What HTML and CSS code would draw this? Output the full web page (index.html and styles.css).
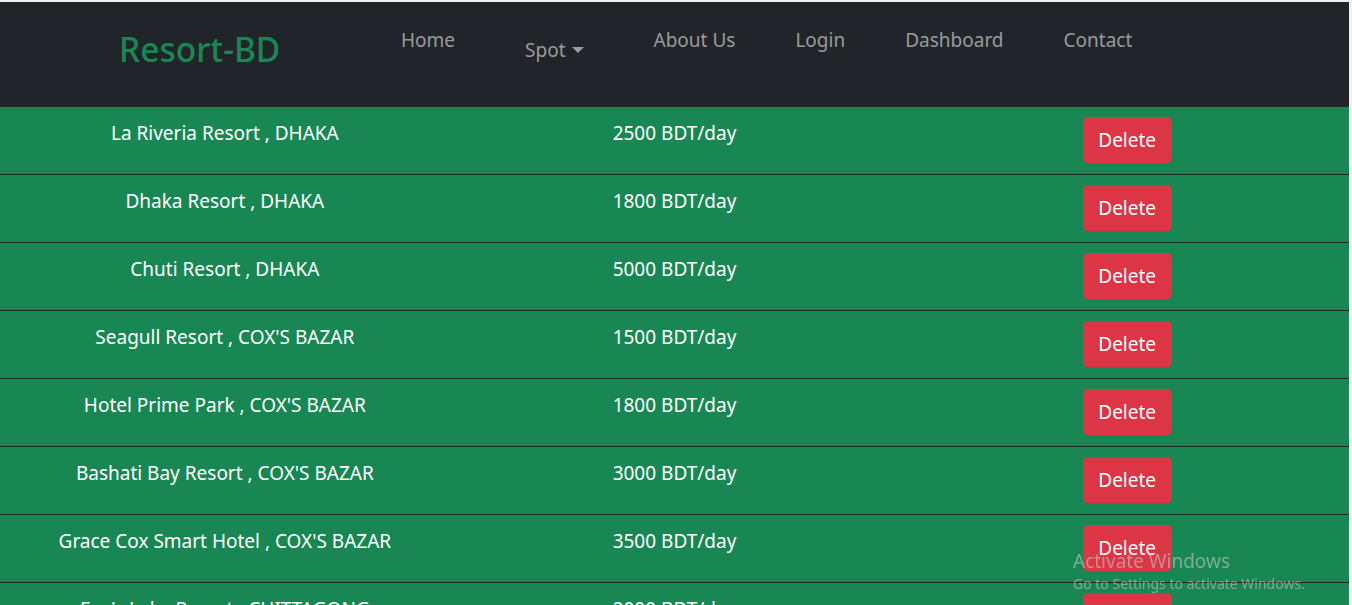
FILE: index.html
```html
<!DOCTYPE html>
<html lang="en">
<head>
<meta charset="utf-8">
<title>Resort-BD</title>
<link rel="stylesheet" href="styles.css">
</head>
<body>
<div class="page">
  <header class="navbar">
    <div class="brand">Resort-BD</div>
    <nav class="nav">
      <a class="nav-link">Home</a>
      <a class="nav-link spot">Spot<span class="caret"></span></a>
      <a class="nav-link">About Us</a>
      <a class="nav-link">Login</a>
      <a class="nav-link">Dashboard</a>
      <a class="nav-link">Contact</a>
    </nav>
  </header>
  <main class="list">
    <div class="row"><div class="cell">La Riveria Resort , DHAKA</div><div class="cell">2500 BDT/day</div><div class="cell"><button class="btn-delete">Delete</button></div></div>
    <div class="row"><div class="cell">Dhaka Resort , DHAKA</div><div class="cell">1800 BDT/day</div><div class="cell"><button class="btn-delete">Delete</button></div></div>
    <div class="row"><div class="cell">Chuti Resort , DHAKA</div><div class="cell">5000 BDT/day</div><div class="cell"><button class="btn-delete">Delete</button></div></div>
    <div class="row"><div class="cell">Seagull Resort , COX'S BAZAR</div><div class="cell">1500 BDT/day</div><div class="cell"><button class="btn-delete">Delete</button></div></div>
    <div class="row"><div class="cell">Hotel Prime Park , COX'S BAZAR</div><div class="cell">1800 BDT/day</div><div class="cell"><button class="btn-delete">Delete</button></div></div>
    <div class="row"><div class="cell">Bashati Bay Resort , COX'S BAZAR</div><div class="cell">3000 BDT/day</div><div class="cell"><button class="btn-delete">Delete</button></div></div>
    <div class="row"><div class="cell">Grace Cox Smart Hotel , COX'S BAZAR</div><div class="cell">3500 BDT/day</div><div class="cell"><button class="btn-delete">Delete</button></div></div>
    <div class="row"><div class="cell">Foy's Lake Resort , CHITTAGONG</div><div class="cell">2000 BDT/day</div><div class="cell"><button class="btn-delete">Delete</button></div></div>
  </main>
</div>
<div class="watermark">
  <div class="wm-title">Activate Windows</div>
  <div class="wm-sub">Go to Settings to activate Windows.</div>
</div>
</body>
</html>
```

FILE: styles.css
```css
html, body {
  margin: 0;
  padding: 0;
  height: 100%;
  overflow: hidden;
}
body {
  background: #f1f1f1;
  font-family: "Noto Sans", "Open Sans", "Liberation Sans", sans-serif;
  padding-top: 2px;
  padding-right: 3px;
  box-sizing: border-box;
}
.page {
  background: #198754;
}
.navbar {
  background: #212529;
  height: 105px;
  box-sizing: border-box;
  padding-top: 22px;
  display: flex;
  align-items: flex-start;
}
.brand {
  flex: 0 0 371px;
  box-sizing: border-box;
  padding-left: 119px;
  white-space: nowrap;
  color: #198754;
  font-size: 33.5px;
  line-height: 50px;
  font-weight: 500;
}
.nav {
  display: flex;
  align-items: flex-start;
}
.nav-link {
  color: rgba(255, 255, 255, 0.55);
  font-size: 19px;
  line-height: 32px;
  padding: 0 30px;
  white-space: nowrap;
}
.nav-link.spot {
  padding: 0 40px;
  margin-top: 10px;
  display: flex;
  align-items: center;
}
.caret {
  display: inline-block;
  margin-left: 6px;
  width: 0;
  height: 0;
  border-top: 6px solid rgba(255, 255, 255, 0.55);
  border-left: 6px solid transparent;
  border-right: 6px solid transparent;
}
.list {
  display: flex;
  flex-direction: column;
}
.row {
  display: grid;
  grid-template-columns: repeat(3, 1fr);
  height: 68px;
  box-sizing: border-box;
  border-bottom: 1px solid #212529;
  color: #ffffff;
  font-size: 19px;
}
.cell {
  text-align: center;
  padding-top: 11px;
  line-height: 30px;
  white-space: nowrap;
}
.cell:last-child {
  padding-top: 10px;
}
.btn-delete {
  background: #dc3545;
  color: #ffffff;
  border: none;
  border-radius: 5px;
  font-family: inherit;
  font-size: 19px;
  width: 89px;
  height: 46px;
  padding: 0;
  margin-left: 6px;
}
.watermark {
  position: fixed;
  left: 1073px;
  top: 548px;
  color: rgba(190, 200, 195, 0.6);
  pointer-events: none;
}
.wm-title {
  font-size: 19px;
  line-height: 26px;
}
.wm-sub {
  font-size: 14px;
  line-height: 20px;
}
```
